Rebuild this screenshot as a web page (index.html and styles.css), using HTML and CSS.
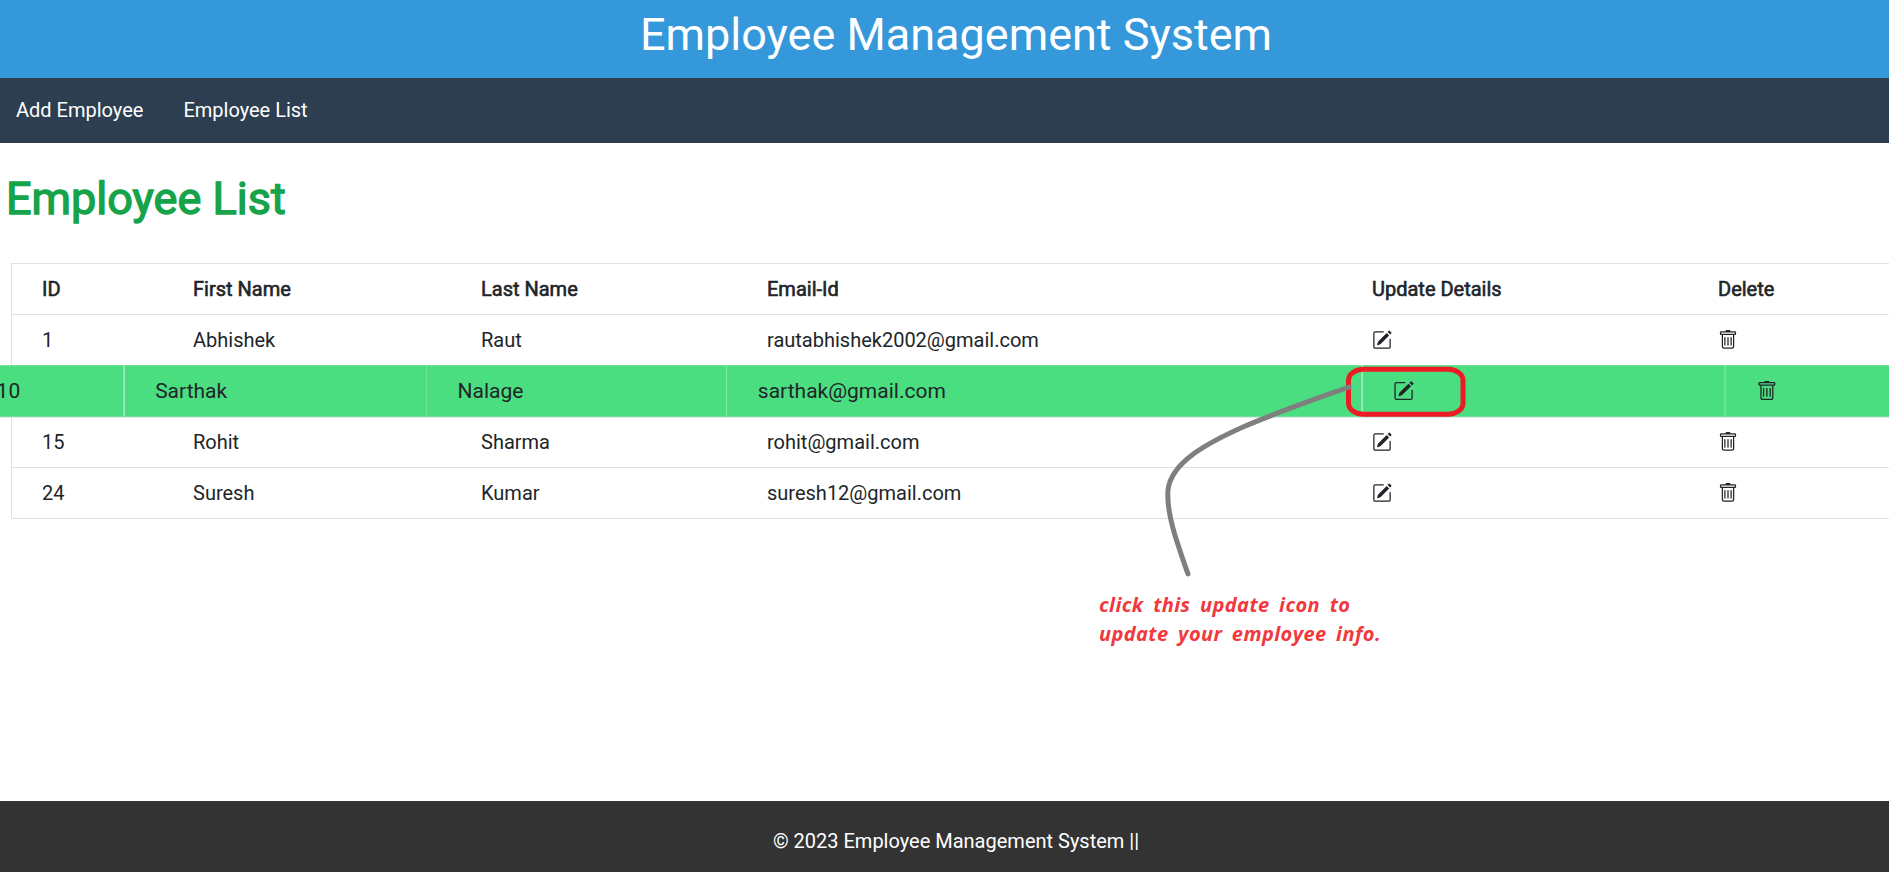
FILE: index.html
```html
<!DOCTYPE html>
<html lang="en">
<head>
<meta charset="utf-8">
<title>Employee Management System</title>
<link rel="stylesheet" href="styles.css">
</head>
<body>
<svg class="sprite" aria-hidden="true">
  <symbol id="edit" viewBox="0 0 16 16">
    <path d="M15.502 1.94a.5.5 0 0 1 0 .706L14.459 3.69l-2-2L13.502.646a.5.5 0 0 1 .707 0l1.293 1.293zm-1.75 2.456-2-2L4.939 9.21a.5.5 0 0 0-.121.196l-.805 2.414a.25.25 0 0 0 .316.316l2.414-.805a.5.5 0 0 0 .196-.12l6.813-6.814z"/>
    <path fill-rule="evenodd" d="M1 13.5A1.5 1.5 0 0 0 2.5 15h11a1.500 1.500 0 0 0 1.500-1.500v-6a.5.5 0 0 0-1 0v6a.5.5 0 0 1-.5.5h-11a.5.5 0 0 1-.5-.5v-11a.5.5 0 0 1 .5-.5H9a.5.5 0 0 0 0-1H2.500A1.500 1.500 0 0 0 1 2.500z"/>
  </symbol>
  <symbol id="trash" viewBox="0 0 16 16">
    <path d="M5.500 5.500A.5.5 0 0 1 6 6v6a.5.5 0 0 1-1 0V6a.5.5 0 0 1 .5-.5m2.500 0a.5.5 0 0 1 .5.5v6a.5.5 0 0 1-1 0V6a.5.5 0 0 1 .5-.5m3 .5a.5.5 0 0 0-1 0v6a.5.5 0 0 0 1 0z"/>
    <path d="M14.500 3a1 1 0 0 1-1 1H13v9a2 2 0 0 1-2 2H5a2 2 0 0 1-2-2V4h-.5a1 1 0 0 1-1-1V2a1 1 0 0 1 1-1H6a1 1 0 0 1 1-1h2a1 1 0 0 1 1 1h3.500a1 1 0 0 1 1 1zM4.118 4 4 4.059V13a1 1 0 0 0 1 1h6a1 1 0 0 0 1-1V4.059L11.882 4zM2.500 3h11V2h-11z"/>
  </symbol>
</svg>
<div class="page">
  <header class="banner">Employee Management System</header>
  <nav class="nav"><a>Add Employee</a><a>Employee List</a></nav>
  <main class="content">
    <h1 class="title">Employee List</h1>
    <table class="employees">
      <colgroup><col class="c-id"><col class="c-first"><col class="c-last"><col class="c-email"><col class="c-update"><col></colgroup>
      <thead>
        <tr><th>ID</th><th>First Name</th><th>Last Name</th><th>Email-Id</th><th>Update Details</th><th>Delete</th></tr>
      </thead>
      <tbody>
        <tr><td>1</td><td>Abhishek</td><td>Raut</td><td>rautabhishek2002@gmail.com</td><td><svg class="icon"><use href="#edit"/></svg></td><td><svg class="icon"><use href="#trash"/></svg></td></tr>
        <tr class="active"><td>10</td><td>Sarthak</td><td>Nalage</td><td>sarthak@gmail.com</td><td><svg class="icon"><use href="#edit"/></svg></td><td><svg class="icon"><use href="#trash"/></svg></td></tr>
        <tr><td>15</td><td>Rohit</td><td>Sharma</td><td>rohit@gmail.com</td><td><svg class="icon"><use href="#edit"/></svg></td><td><svg class="icon"><use href="#trash"/></svg></td></tr>
        <tr><td>24</td><td>Suresh</td><td>Kumar</td><td>suresh12@gmail.com</td><td><svg class="icon"><use href="#edit"/></svg></td><td><svg class="icon"><use href="#trash"/></svg></td></tr>
      </tbody>
    </table>
  </main>
  <footer class="footer">© 2023 Employee Management System ||</footer>
</div>
<svg class="marks" viewBox="0 0 1889 872">
  <rect x="1348.500" y="369.300" width="114.500" height="45" rx="15" ry="11"/>
  <path d="M1349 387 C1310 401 1275 413 1243 427 C1205 444 1171 463 1168 490 C1166 515 1179 548 1188 574"/>
</svg>
<div class="note">click this update icon to<br>update your employee info.</div>
</body>
</html>
```

FILE: styles.css
```css
* { box-sizing: border-box; }
body {
  margin: 0;
  width: 1889px;
  height: 872px;
  overflow: hidden;
  position: relative;
  background: #fff;
  color: #212529;
  font: 400 20px/30px Roboto, "Liberation Sans", sans-serif;
}
.sprite { position: absolute; width: 0; height: 0; }
.page { width: 1912px; height: 872px; display: flex; flex-direction: column; }
.banner {
  height: 78px;
  padding-top: 7px;
  background: #3498db;
  color: #fff;
  font-size: 45px;
  line-height: 56px;
  text-align: center;
}
.nav {
  height: 65px;
  padding: 0 16px 2px;
  display: flex;
  align-items: center;
  gap: 40px;
  background: #2c3e50;
  color: #fff;
}
.content { flex: 1; }
.title {
  margin: 0;
  padding: 28px 0 0 6px;
  height: 120px;
  color: #16a34a;
  font-size: 45px;
  font-weight: 400;
  line-height: 56px;
  -webkit-text-stroke: 1.4px #16a34a;
}
.employees {
  width: 1878px;
  margin-left: 11px;
  table-layout: fixed;
  border-spacing: 0;
  border: 1px solid #dee2e6;
  border-width: 1px 0 0 1px;
}
.c-id { width: 151px; }
.c-first { width: 288px; }
.c-last { width: 286px; }
.c-email { width: 605px; }
.c-update { width: 346px; }
.employees th, .employees td {
  height: 51px;
  padding: 10px 0 10px 30px;
  border-bottom: 1px solid #dee2e6;
  text-align: left;
  font-weight: 400;
}
.employees th { -webkit-text-stroke: 0.6px #212529; }
.employees .active { transform: scale(1.05, 1.03); }
.employees .active td { background: #4ade80; background-clip: padding-box; }
.employees .active td + td { padding-left: 29px; border-left: 1px solid #68e495; }
.employees .active td:nth-child(4) { border-left-color: #4fdf83; }
.icon { display: block; width: 20px; height: 20px; fill: #212529; }
.footer {
  height: 71px;
  padding-top: 25px;
  background: #333;
  color: #fff;
  text-align: center;
}
.marks { position: absolute; left: 0; top: 0; width: 1889px; height: 872px; fill: none; stroke-width: 5; stroke-linecap: round; }
.marks rect { stroke: #ed1c24; }
.marks path { stroke: #7f7f7f; }
.note {
  position: absolute;
  left: 1099px;
  top: 590px;
  color: #f0383e;
  font: italic 700 20px/29px "Comic Sans MS", "Open Sans", sans-serif;
  letter-spacing: 0.4px;
  word-spacing: 4px;
  white-space: nowrap;
}
```
